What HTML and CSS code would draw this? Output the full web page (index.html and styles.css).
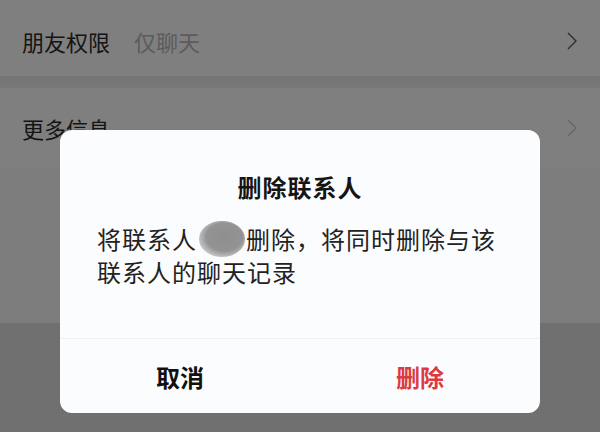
FILE: index.html
```html
<!DOCTYPE html>
<html lang="zh-CN">
<head>
    <meta charset="UTF-8">
    <meta name="viewport" content="width=device-width, initial-scale=1.0">
    <title>删除联系人</title>
    <link rel="stylesheet" href="styles.css">
</head>
<body>
    <div class="page">
        <div class="row row-first">
            <span class="row-label">朋友权限</span>
            <span class="row-value">仅聊天</span>
            <span class="chevron">
                <svg width="12" height="20" viewBox="0 0 12 20"><path d="M2 2 L10 10 L2 18" fill="none" stroke="currentColor" stroke-width="1.4"/></svg>
            </span>
        </div>
        <div class="gap"></div>
        <div class="row row-more">
            <span class="row-label">更多信息</span>
            <span class="chevron chevron-light">
                <svg width="12" height="20" viewBox="0 0 12 20"><path d="M2 2 L10 10 L2 18" fill="none" stroke="currentColor" stroke-width="1.4"/></svg>
            </span>
        </div>
        <div class="gap-bottom"></div>
    </div>

    <div class="mask"></div>

    <div class="dialog">
        <div class="dialog-body">
            <h2 class="dialog-title">删除联系人</h2>
            <p class="dialog-text">将联系人<span class="blurred"></span>删除，将同时删除与该<br>联系人的聊天记录</p>
        </div>
        <div class="dialog-actions">
            <button class="btn btn-cancel">取消</button>
            <button class="btn btn-delete">删除</button>
        </div>
    </div>
</body>
</html>
```

FILE: styles.css
```css
body {
    margin: 0;
    padding: 0;
    font-family: "Noto Sans CJK SC", "Noto Sans", sans-serif;
    background-color: #e0e0e0;
    overflow: hidden;
}

.page {
    width: 600px;
    height: 432px;
    background-color: #e0e0e0;
}

.row {
    display: flex;
    align-items: center;
    padding: 0 22px;
    background-color: #ffffff;
}

.row-first {
    height: 70px;
    padding-top: 6px;
}

.row-more {
    height: 80px;
    background-color: #fefefe;
}

.row-label {
    font-size: 22px;
    color: #2a2a2a;
}

.row-value {
    margin-left: 24px;
    font-size: 22px;
    color: #b8b8b8;
}

.chevron {
    margin-left: auto;
    display: flex;
    color: #5a5a5a;
}

.chevron-light {
    color: #c8c8c8;
}

.gap {
    height: 12px;
    background: linear-gradient(#e9e9e9, #f2f2f2);
}

.gap-bottom {
    height: 155px;
    background-color: #fafafa;
}

.mask {
    position: absolute;
    inset: 0;
    background-color: rgba(0, 0, 0, 0.5);
}

.dialog {
    position: absolute;
    left: 60px;
    top: 130px;
    width: 480px;
    height: 283px;
    background-color: #fbfcfd;
    border-radius: 12px;
    display: flex;
    flex-direction: column;
}

.dialog-body {
    height: 209px;
    padding: 0 37px;
    border-bottom: 1px solid #eef0f2;
    box-sizing: border-box;
}

.dialog-title {
    margin: 40px 0 0;
    font-size: 24px;
    line-height: 34px;
    font-weight: bold;
    text-align: center;
    letter-spacing: 1px;
    color: #151515;
}

.dialog-text {
    margin: 17px 0 0;
    font-size: 24px;
    line-height: 29px;
    letter-spacing: 1px;
    color: #222222;
}

.blurred {
    display: inline-block;
    width: 46px;
    height: 36px;
    margin: 0 1px 0 2px;
    vertical-align: -8px;
    border-radius: 50%;
    background: radial-gradient(ellipse at 55% 45%, #8f8f8f 0%, #939393 50%, rgba(170, 170, 170, 0.6) 75%, rgba(251, 252, 253, 0) 100%);
}

.dialog-actions {
    flex: 1;
    display: flex;
}

.btn {
    flex: 1;
    border: none;
    background: none;
    font-family: inherit;
    font-size: 24px;
    font-weight: bold;
    padding: 0;
}

.btn-cancel {
    color: #111111;
}

.btn-delete {
    color: #dc3a40;
}
```
